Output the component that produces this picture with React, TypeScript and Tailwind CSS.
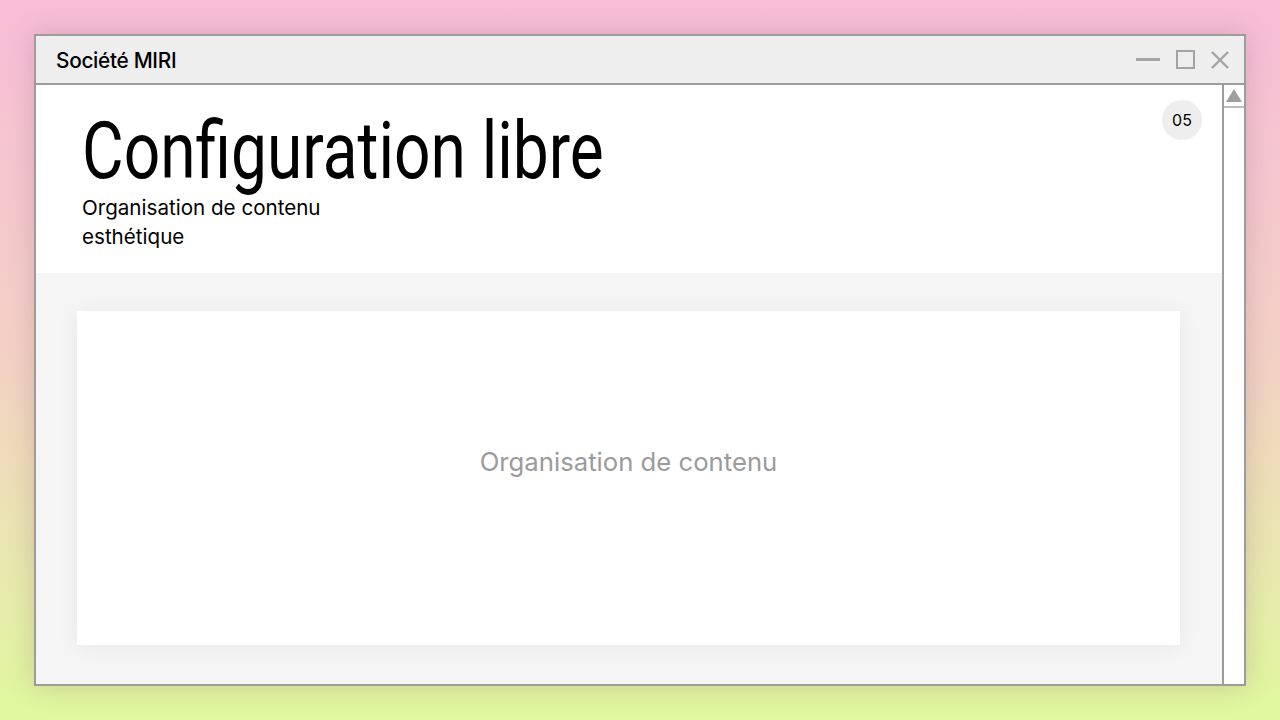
import React from "react";

export default function App() {
  return (
    <div
      className="w-[1280px] h-[720px] overflow-hidden bg-gradient-to-b from-[#f8bdd8] via-[#f3d1c4] to-[#dff99c] pt-[34px] pl-[34px]"
      style={{ fontFamily: "Inter, 'Noto Sans', sans-serif" }}
    >
      <div className="w-[1212px] h-[652px] border-2 border-[#9c9c9c] bg-white flex flex-col shadow-[0_0_24px_rgba(120,80,100,0.25)]">
        {/* title bar */}
        <div className="h-[49px] shrink-0 bg-[#efeeee] border-b-2 border-[#9c9c9c] flex items-center justify-between pl-[20px] pr-[14px]">
          <span className="text-[20.8px] font-medium text-black tracking-[-0.3px] mt-[2px]">Société MIRI</span>
          <div className="flex items-center">
            <div className="w-[24px] h-[2.5px] bg-[#a3a3a3]" />
            <div className="ml-[16px] w-[19px] h-[19px] border-2 border-[#a3a3a3]" />
            <svg className="ml-[15px]" width="20" height="20" viewBox="0 0 20 20">
              <path d="M2 2 L18 18 M18 2 L2 18" stroke="#a3a3a3" strokeWidth="2.4" />
            </svg>
          </div>
        </div>
        {/* body */}
        <div className="flex-1 flex min-h-0">
          <div className="flex-1 flex flex-col">
            <div className="h-[188px] shrink-0 bg-white relative pl-[46px] pt-[23px]">
              <h1
                className="text-[80px] leading-[80px] mb-[6px] text-black origin-left scale-x-[0.8] translate-y-[3px] whitespace-nowrap"
                style={{ fontFamily: "Roboto, sans-serif" }}
              >
                Configuration libre
              </h1>
              <p className="text-[20.6px] leading-[29px] text-black -mt-[1px]">
                Organisation de contenu
                <br />
                esthétique
              </p>
              <div className="absolute right-[20px] top-[15px] w-[40px] h-[40px] rounded-full bg-[#efeeee] flex items-center justify-center text-[16px] text-black">
                05
              </div>
            </div>
            <div className="flex-1 bg-[#f6f5f5] pt-[38px] pb-[39px] pl-[41px] pr-[42px]">
              <div className="w-full h-full bg-white shadow-[0_2px_20px_rgba(0,0,0,0.06)] flex items-center justify-center">
                <span className="text-[25.7px] text-[#9b9b9b] mb-[32px]">Organisation de contenu</span>
              </div>
            </div>
          </div>
          {/* scrollbar */}
          <div className="w-[22px] shrink-0 border-l-2 border-[#9c9c9c] bg-white flex flex-col">
            <div className="h-[23px] border-b-2 border-[#bdbdbd] flex items-center justify-center">
              <svg width="16" height="13" viewBox="0 0 16 13">
                <path d="M8 0 L16 13 L0 13 Z" fill="#9e9e9e" />
              </svg>
            </div>
          </div>
        </div>
      </div>
    </div>
  );
}
